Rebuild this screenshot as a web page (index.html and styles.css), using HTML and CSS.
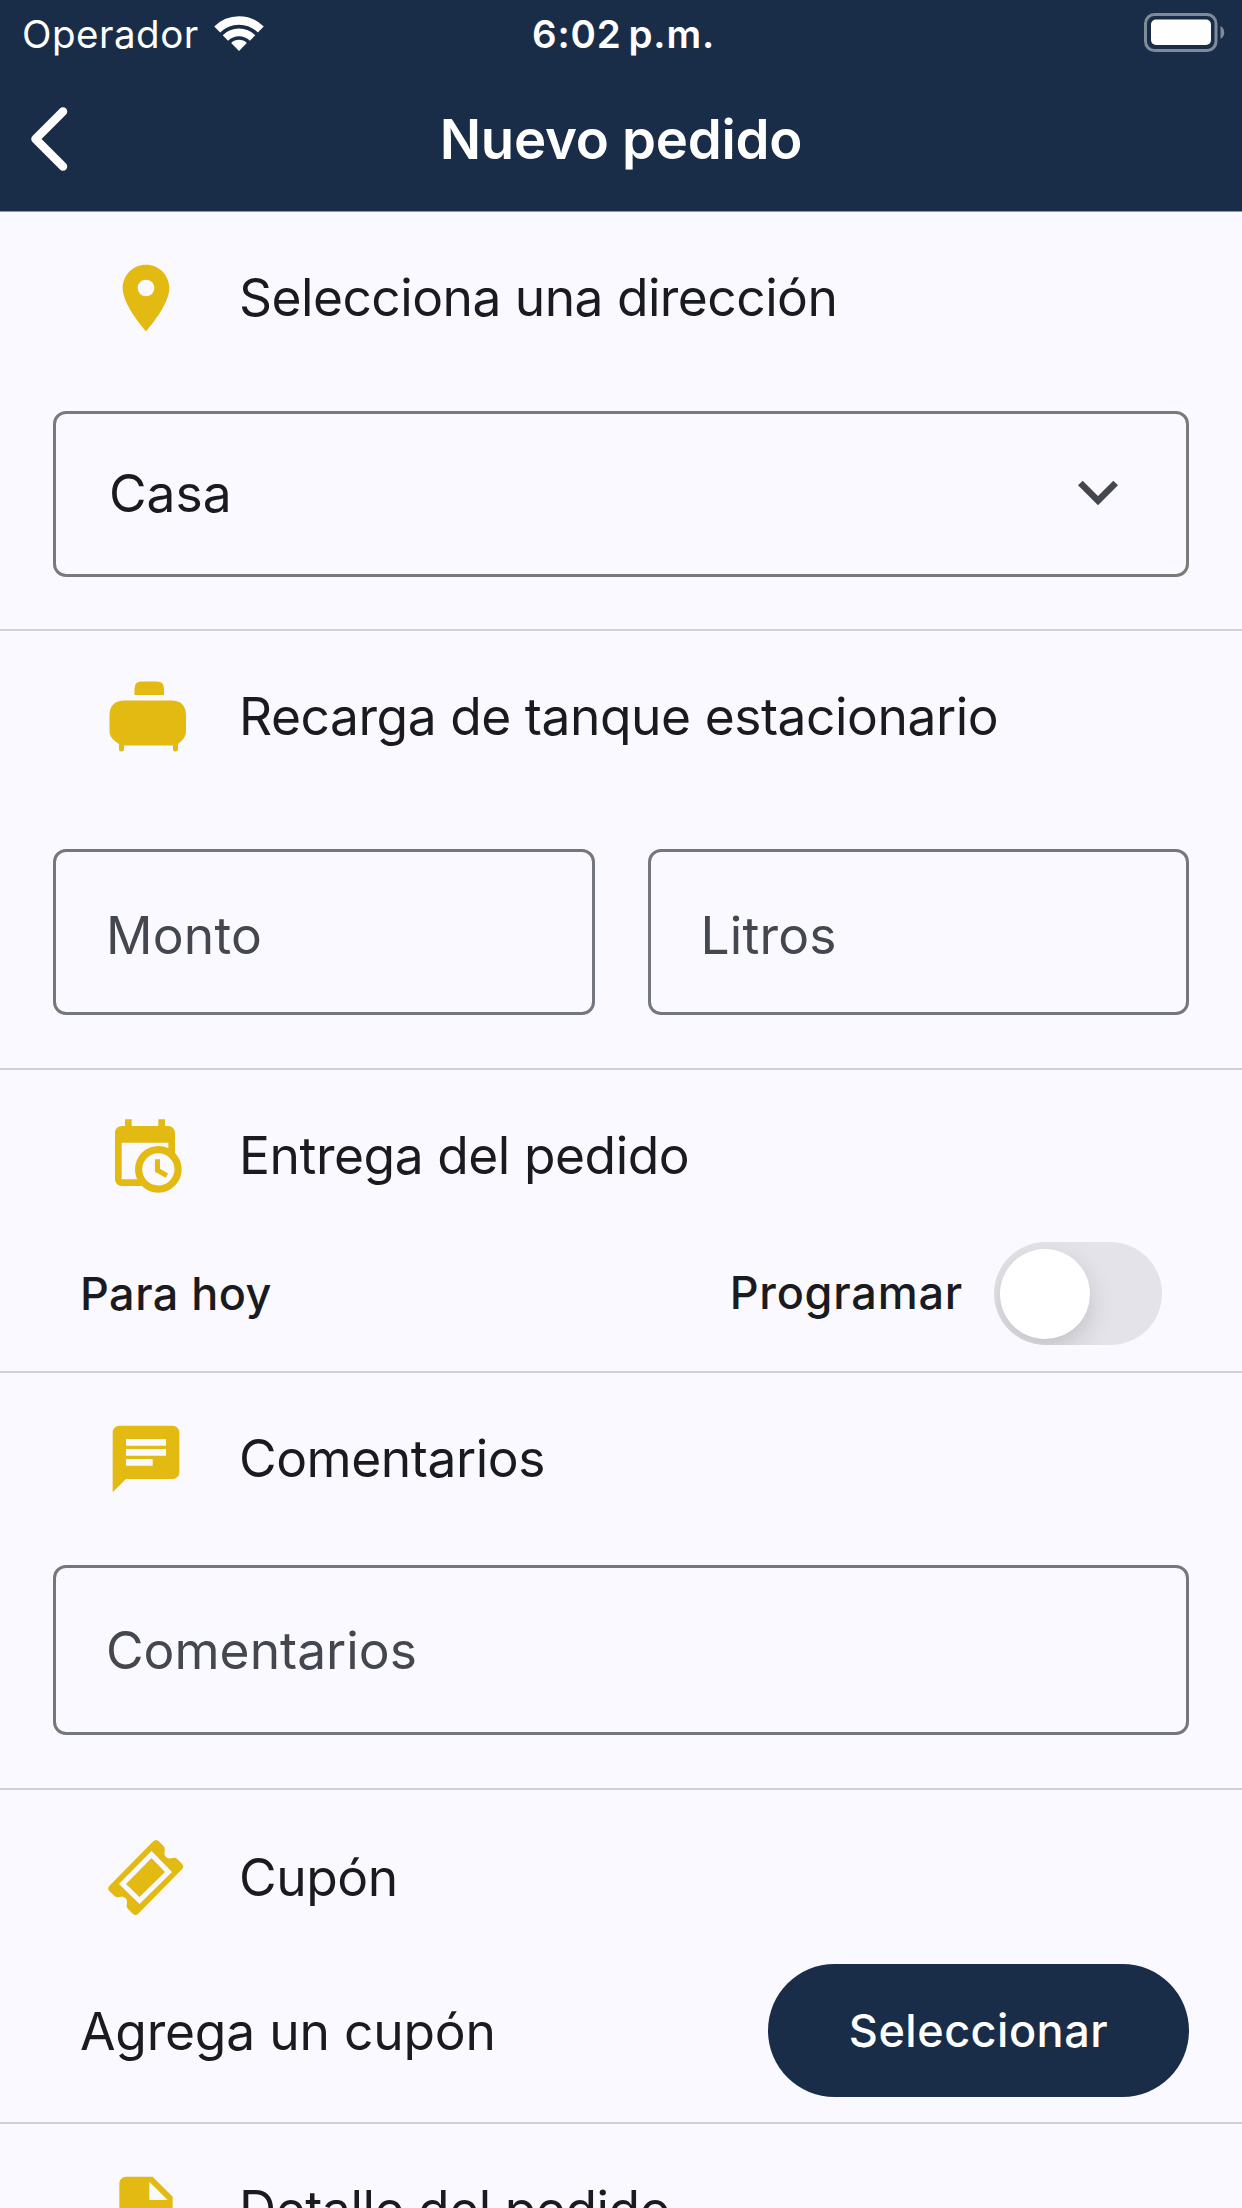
FILE: index.html
```
<!DOCTYPE html>
<html lang="es">
<head>
  <meta charset="UTF-8">
  <meta name="viewport" content="width=device-width, initial-scale=1.0">
  <title>Nuevo pedido</title>
  <link rel="stylesheet" href="styles.css">
</head>
<body>
  <header class="header">
    <div class="status-bar">
      <div class="carrier">
        <span class="carrier-name">Operador</span>
        <svg class="wifi" viewBox="0 0 50 38" fill="none" stroke="#fff">
          <path d="M3.2 15.5a31 31 0 0 1 43.6 0" stroke-width="8.4"/>
          <path d="M11.4 24a19.3 19.3 0 0 1 27.2 0" stroke-width="7.6"/>
          <path d="M25 37l-7.8-8a11 11 0 0 1 15.6 0z" fill="#fff" stroke="none"/>
        </svg>
      </div>
      <span class="time">6:02<span class="period">p.m.</span></span>
      <svg class="battery" viewBox="0 0 81 39">
        <rect x="1.5" y="1.5" width="70.5" height="36" rx="9" fill="none" stroke="#7f8a9b" stroke-width="3"/>
        <rect x="7" y="6.5" width="60" height="25.5" rx="5" fill="#fff"/>
        <path d="M76.5 13c5 2.5 5 10.5 0 13z" fill="#7f8a9b"/>
      </svg>
    </div>
    <div class="nav-bar">
      <a class="back-btn" href="#" aria-label="Regresar">
        <svg viewBox="0 0 38 66" fill="none" stroke="#fff" stroke-width="8.5" stroke-linecap="round" stroke-linejoin="round">
          <path d="M33 5.500L5.500 33 33 60.500"/>
        </svg>
      </a>
      <h1 class="title">Nuevo pedido</h1>
    </div>
  </header>

  <main>
    <section class="section address">
      <div class="section-head">
        <svg class="icon" viewBox="0 0 24 24"><path d="M12 2C8.130 2 5 5.130 5 9c0 5.250 7 13 7 13s7-7.750 7-13c0-3.870-3.130-7-7-7zm0 9.500a2.500 2.500 0 0 1 0-5 2.500 2.500 0 0 1 0 5z"/></svg>
        <h2>Selecciona una dirección</h2>
      </div>
      <div class="field select">
        <span class="value">Casa</span>
        <svg class="arrow" viewBox="0 0 24 24"><path d="M7.410 8.590L12 13.170l4.590-4.580L18 10l-6 6-6-6z"/></svg>
      </div>
    </section>

    <section class="section tank">
      <div class="section-head">
        <svg class="icon" viewBox="0 0 80 80">
          <path d="M28.500 18v-6.500q0-7 7-7h15.500q7 0 7 7v6.500z"/>
          <path d="M19 23.500h46q15 0 15 15v16c0 5-3 8.500-8 12.500v5q0 2.500-2.500 2.500t-2.500-2.500v-3.500H18v3.500q0 2.500-2.500 2.500t-2.500-2.500v-5c-6-4-9.500-7.500-9.500-12.500v-16q0-15 15.500-15z"/>
        </svg>
        <h2>Recarga de tanque estacionario</h2>
      </div>
      <div class="field-row">
        <div class="field"><span class="placeholder">Monto</span></div>
        <div class="field"><span class="placeholder">Litros</span></div>
      </div>
    </section>

    <section class="section delivery">
      <div class="section-head">
        <svg class="icon" viewBox="0 0 24 24"><path d="M15 13H16.500V15.820L18.940 17.230L18.190 18.530L15 16.690V13M19 8H5V19H9.670C9.240 18.090 9 17.070 9 16A7 7 0 0 1 16 9C17.070 9 18.090 9.240 19 9.670V8M5 21C3.890 21 3 20.100 3 19V5C3 3.890 3.890 3 5 3H6V1H8V3H16V1H18V3H19A2 2 0 0 1 21 5V11.100C22.240 12.360 23 14.090 23 16A7 7 0 0 1 16 23C14.090 23 12.360 22.240 11.100 21H5M16 11.150A4.850 4.850 0 0 0 11.150 16C11.150 18.680 13.320 20.850 16 20.850A4.850 4.850 0 0 0 20.850 16C20.850 13.320 18.680 11.150 16 11.150Z"/></svg>
        <h2>Entrega del pedido</h2>
      </div>
      <div class="option-row">
        <span class="today">Para hoy</span>
        <div class="schedule">
          <span class="schedule-label">Programar</span>
          <div class="switch"><div class="knob"></div></div>
        </div>
      </div>
    </section>

    <section class="section comments">
      <div class="section-head">
        <svg class="icon" viewBox="0 0 24 24"><path d="M20 2H4c-1.100 0-1.990.9-1.990 2L2 22l4-4h14c1.100 0 2-.9 2-2V4c0-1.100-.9-2-2-2zM6 9h12v2H6V9zm8 5H6v-2h8v2zm4-6H6V6h12v2z"/></svg>
        <h2>Comentarios</h2>
      </div>
      <div class="field"><span class="placeholder">Comentarios</span></div>
    </section>

    <section class="section coupon">
      <div class="section-head">
        <svg class="icon" viewBox="0 0 80 80">
          <path d="M47 3.500q3-3 6 0l4.500 4.500q2.200 2.200 1.200 5c-1.500 6 3.500 8.500 7.500 7q3-1 5 1l4.500 4.500q3 3 0 6L32.500 75.500q-3 3-6 0l-4.500-4.500q-2-2-1.200-5c1.500-5.500-3-8-7.300-7q-3 1-5-1L3.700 53.500q-3-3 0-6z"/>
          <path class="ticket-frame" d="M45.500 16.500l17 17.500L33.500 62.500 16.500 46z"/>
        </svg>
        <h2>Cupón</h2>
      </div>
      <div class="coupon-row">
        <span class="coupon-text">Agrega un cupón</span>
        <button class="select-btn">Seleccionar</button>
      </div>
    </section>

    <section class="section detail">
      <div class="section-head">
        <svg class="icon" viewBox="0 0 24 24"><path d="M14 2H6c-1.100 0-1.990.9-1.990 2L4 20c0 1.100.89 2 1.990 2H18c1.100 0 2-.9 2-2V8l-6-6zm-1 7V3.500L18.500 9H13z"/></svg>
        <h2>Detalle del pedido</h2>
      </div>
    </section>
  </main>
</body>
</html>
```
FILE: styles.css
```
/* General Styles */
* {
  box-sizing: border-box;
}

body {
  margin: 0;
  height: 2208px;
  overflow: hidden;
  background: #faf9ff;
  color: #1a1b20;
  font-family: Inter, 'Liberation Sans', sans-serif;
  font-size: 51.5px;
  line-height: 64px;
}

svg {
  display: block;
  flex-shrink: 0;
}

span,
h1,
h2 {
  white-space: nowrap;
}

/* Header */
.header {
  height: 212px;
  padding-top: 13px;
  border-bottom: 1px solid #8d94a6;
  background: #1a2d48;
  color: #fff;
}

.status-bar {
  display: grid;
  grid-template-columns: 1fr auto 1fr;
  height: 40px;
  padding: 0 17px 0 22px;
  font-size: 38.5px;
  line-height: 42px;
}

.carrier {
  display: flex;
  gap: 14px;
}

.carrier-name {
  width: 178px;
  letter-spacing: 0.5px;
}

.wifi {
  width: 50px;
  height: 38px;
  margin-top: 1px;
}

.time {
  font-weight: 600;
  letter-spacing: 0.8px;
}

.period {
  margin-left: 7px;
}

.battery {
  width: 81px;
  height: 39px;
  justify-self: end;
}

.nav-bar {
  display: grid;
  grid-template-columns: 60px 1fr 60px;
  align-items: center;
  height: 66px;
  margin-top: 53px;
  padding: 0 30px;
}

.back-btn svg {
  width: 38px;
  height: 66px;
}

.title {
  margin: 0;
  text-align: center;
  font-size: 54.5px;
  font-weight: 600;
  letter-spacing: -0.25px;
}

/* Sections */
.section {
  padding: 46px 53px 0;
  border-bottom: 2px solid #d0d0d8;
}

.section-head {
  display: flex;
  align-items: center;
  gap: 53px;
  height: 80px;
  padding-left: 53px;
}

.section-head h2 {
  margin: 0;
  padding-bottom: 2px;
  font-size: inherit;
  font-weight: 400;
  letter-spacing: -0.45px;
}

.icon {
  width: 80px;
  height: 80px;
  fill: #e3ba12;
}

.address {
  height: 419px;
}

.address .section-head h2 {
  letter-spacing: -0.53px;
}

.tank {
  height: 439px;
}

.delivery {
  height: 303px;
}

.delivery .icon {
  margin-left: -1px;
  margin-right: 1px;
}

.comments {
  height: 417px;
}

.coupon {
  height: 334px;
  padding-top: 48px;
}

.ticket-frame {
  fill: none;
  stroke: #faf9ff;
  stroke-width: 5;
}

/* Fields */
.field {
  display: flex;
  align-items: center;
  height: 166px;
  margin-top: 73px;
  padding: 0 50px;
  border: 3px solid #74777f;
  border-radius: 13px;
}

.select {
  justify-content: space-between;
  padding: 0 48px 3px 53px;
  border-color: #7a7a7a;
}

.arrow {
  width: 80px;
  height: 80px;
  margin-bottom: 2px;
  fill: #44474f;
}

.placeholder {
  color: #44474f;
}

.field-row {
  display: grid;
  grid-template-columns: 1fr 1fr;
  gap: 53px;
  margin-top: 92px;
}

.field-row .field {
  margin-top: 0;
  padding-top: 5px;
  letter-spacing: 0.2px;
}

.comments .field {
  height: 170px;
  margin-top: 66px;
}

/* Delivery switch */
.option-row {
  display: flex;
  justify-content: space-between;
  align-items: center;
  height: 104px;
  margin-top: 45px;
  padding: 0 27px;
  font-size: 45px;
  font-weight: 500;
}

.today {
  padding-top: 1px;
  letter-spacing: 0.45px;
}

.schedule {
  display: flex;
  align-items: center;
  gap: 31px;
}

.schedule-label {
  padding-bottom: 1px;
  letter-spacing: 0.8px;
}

.switch {
  width: 168px;
  height: 103px;
  padding: 7px 6px;
  border-radius: 52px;
  background: #e4e3e9;
  overflow: hidden;
}

.knob {
  width: 90px;
  height: 90px;
  border-radius: 50%;
  background: #fff;
  box-shadow: 0 10px 26px rgba(0, 0, 0, 0.15);
}

/* Coupon */
.coupon-row {
  display: flex;
  justify-content: space-between;
  align-items: center;
  height: 133px;
  margin-top: 46px;
  padding-left: 27px;
}

.coupon-text {
  letter-spacing: -0.2px;
}

.select-btn {
  width: 421px;
  height: 133px;
  border: none;
  border-radius: 67px;
  background: #1a2d48;
  color: #fff;
  font-family: inherit;
  font-size: 45px;
  font-weight: 500;
  letter-spacing: 0.5px;
}

.detail {
  border-bottom: none;
}
```
